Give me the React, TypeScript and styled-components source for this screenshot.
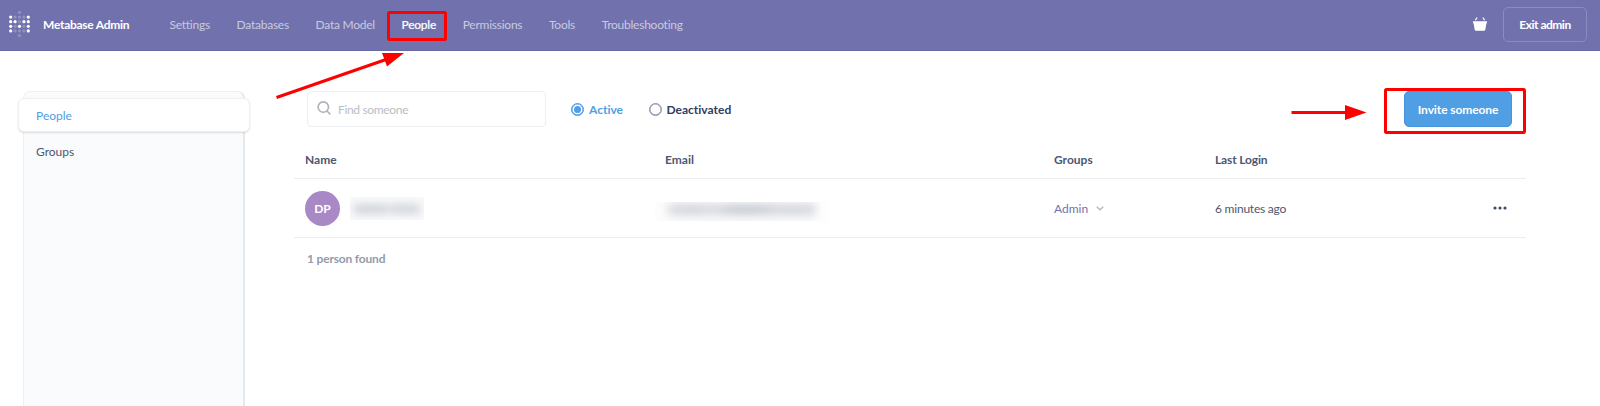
import React from "react";
import styled, { createGlobalStyle } from "styled-components";

const GlobalStyle = createGlobalStyle`
  *, *::before, *::after { box-sizing: border-box; }
  html, body { margin: 0; background: #fff; }
  body {
    font-family: Lato, sans-serif;
    font-size: 12px;
    line-height: 16px;
    font-variant-ligatures: none;
    color: #4c5773;
    overflow: hidden;
  }
`;

const Page = styled.div`
  position: relative;
  display: flex;
  flex-direction: column;
  width: 1600px;
  height: 406px;
  overflow: hidden;
`;

const Header = styled.header`
  display: flex;
  align-items: center;
  height: 51px;
  flex: none;
  padding: 0 13px 2px 9px;
  background: #7172ad;
  border-bottom: 1px solid #6a6ba6;
  color: #fff;
`;

const Brand = styled.div`
  display: flex;
  align-items: center;
  gap: 12px;
  width: 160.5px;
  font-weight: 700;
  letter-spacing: -0.27px;
  white-space: nowrap;

  span { padding-top: 1px; }
`;

const Nav = styled.nav`
  display: flex;
  flex: 1;
  gap: 26.7px;
  padding-top: 1px;
  letter-spacing: -0.25px;
`;

const NavLink = styled.a<{ $active?: boolean }>`
  color: ${(p) => (p.$active ? "#fff" : "rgba(255, 255, 255, 0.63)")};
  -webkit-text-stroke: ${(p) => (p.$active ? "0.2px #fff" : "0")};
  white-space: nowrap;
`;

const ExitButton = styled.button`
  width: 84px;
  height: 35px;
  margin-left: 16px;
  padding: 1px 0 0;
  border: 1px solid #8b8cc0;
  border-radius: 5px;
  background: transparent;
  color: #fff;
  font: inherit;
  font-weight: 700;
  letter-spacing: -0.5px;
`;

const Body = styled.div`
  display: flex;
  flex: 1;
  padding: 40px 74px 0 23px;
`;

const Sidebar = styled.aside`
  width: 222px;
  height: 340px;
  margin-right: 48px;
  padding-top: 6px;
  background: #f9fbfc;
  border: 1px solid #edeff1;
  border-right: 2px solid #e6e9ec;
  border-radius: 7px;
`;

const SidebarItem = styled.a<{ $active?: boolean }>`
  display: flex;
  align-items: center;
  height: 34px;
  margin: 0 ${(p) => (p.$active ? "-7px" : "0")} 3px ${(p) => (p.$active ? "-6px" : "0")};
  padding: ${(p) => (p.$active ? "2px 0 0 17px" : "0 0 0 12px")};
  border: ${(p) => (p.$active ? "1px solid #eeeff0" : "0")};
  border-radius: 6px;
  background: ${(p) => (p.$active ? "#fff" : "transparent")};
  box-shadow: ${(p) => (p.$active ? "0 1px 2px rgba(0, 0, 0, 0.13)" : "none")};
  color: ${(p) => (p.$active ? "#509ee3" : "#4c5773")};
`;

const Main = styled.main`
  width: 1233px;
`;

const Toolbar = styled.div`
  display: flex;
  align-items: center;
  height: 36px;
  padding: 0 14px;
`;

const SearchBox = styled.div`
  display: flex;
  align-items: center;
  gap: 7px;
  width: 239px;
  height: 36px;
  margin-right: 25px;
  padding: 1px 0 0 9px;
  border: 1px solid #eeeff0;
  border-radius: 4px;
  color: #b9bdc7;
  letter-spacing: -0.33px;

  svg { margin-bottom: 4px; }
`;

const RadioOption = styled.label<{ $checked?: boolean }>`
  display: flex;
  align-items: center;
  gap: 5px;
  margin-right: 25.5px;
  color: ${(p) => (p.$checked ? "#509ee3" : "#303d5c")};
  font-weight: 700;
  padding-top: 1px;
`;

const RadioDot = styled.span<{ $checked?: boolean }>`
  width: 13px;
  height: 13px;
  margin-bottom: 1px;
  padding: 2px;
  border: 1px solid ${(p) => (p.$checked ? "#3e93e6" : "#8790a3")};
  box-shadow: inset 0 0 0 0.5px ${(p) => (p.$checked ? "#3e93e6" : "#8790a3")};
  border-radius: 50%;
  background: ${(p) => (p.$checked ? "#509ee3" : "#fff")};
  background-clip: content-box;
`;

const InviteButton = styled.button`
  width: 108px;
  height: 36px;
  margin-left: auto;
  padding: 1px 0 0;
  border: 1px solid #4793d8;
  border-radius: 5px;
  background: #509ee3;
  color: #fff;
  font: inherit;
  font-weight: 700;
  letter-spacing: -0.1px;
`;

const Row = styled.div<{ $head?: boolean }>`
  display: grid;
  grid-template-columns: 360px 389px 161px 1fr 33px;
  align-items: center;
  height: ${(p) => (p.$head ? "52px" : "59px")};
  margin-left: 1px;
  padding-left: 11px;
  padding-top: ${(p) => (p.$head ? "15px" : "0")};
  border-bottom: 1px solid #eceef0;
  font-weight: ${(p) => (p.$head ? 700 : 400)};
`;

const Person = styled.div`
  display: flex;
  align-items: center;
  gap: 10px;
`;

const Avatar = styled.div`
  display: flex;
  align-items: center;
  justify-content: center;
  width: 35px;
  height: 35px;
  padding-top: 1px;
  border-radius: 50%;
  background: #a989c5;
  color: #fff;
  font-size: 12px;
  font-weight: 700;
`;

const Redacted = styled.div<{ $width: number; $height: number; $padding: string; $fill: string }>`
  display: flex;
  width: ${(p) => p.$width}px;
  height: ${(p) => p.$height}px;
  padding: ${(p) => p.$padding};
  overflow: hidden;

  &::before {
    content: "";
    flex: 1;
    background: ${(p) => p.$fill};
    filter: blur(4px);
  }
`;

const NameMask = styled.div`
  background: #f8f9fa;
`;

const EmailMask = styled.div`
  width: 176px;
  margin: 7px 0 0 -10px;
  background: linear-gradient(90deg, #fdfdfd, #f8f8f9 15%, #f8f8f9 85%, #fff);
`;

const GroupSelect = styled.div`
  display: flex;
  align-items: center;
  gap: 8px;
  padding-top: 1px;
  color: #7172ad;
`;

const LastLogin = styled.span`
  padding-top: 1px;
  letter-spacing: -0.22px;
`;

const HeadCell = styled.span<{ $tight?: boolean }>`
  letter-spacing: ${(p) => (p.$tight ? "-0.15px" : "0")};
`;

const Count = styled.div`
  padding: 13px 14px;
  color: #949aab;
  font-weight: 700;
  letter-spacing: -0.18px;
`;

const Annotations = styled.svg`
  position: absolute;
  left: 0;
  top: 0;
  pointer-events: none;
`;

const LOGO = ["..o..", "#ooo#", "##o##", "#o#o#", "#ooo#", "..o.."];

function Logo() {
  return (
    <svg width="22" height="28" viewBox="0 0 22 28">
      {LOGO.flatMap((row, y) =>
        row.split("").map((c, x) =>
          c === "." ? null : (
            <circle
              key={`${x}-${y}`}
              cx={1.7 + x * 4.4}
              cy={2.4 + y * 4.64}
              r={1.6}
              fill="#fff"
              opacity={c === "#" ? 1 : 0.22}
            />
          )
        )
      )}
    </svg>
  );
}

const NAV_ITEMS = ["Settings", "Databases", "Data Model", "People", "Permissions", "Tools", "Troubleshooting"];

export default function App() {
  return (
    <Page>
      <GlobalStyle />
      <Header>
        <Brand>
          <Logo />
          <span>Metabase Admin</span>
        </Brand>
        <Nav>
          {NAV_ITEMS.map((item) => (
            <NavLink key={item} $active={item === "People"}>{item}</NavLink>
          ))}
        </Nav>
        <svg width="14" height="14" viewBox="0 0 14 14">
          <path d="M0 4.2h14v2.1h-.6l-1.1 6.4q-.2 1.1-1.3 1.1H3q-1.1 0-1.3-1.1L.6 6.3H0z" fill="#fff" />
          <path d="M2.4 3.2 4.2.5M11.6 3.2 9.8.5" stroke="#fff" strokeWidth="1.2" fill="none" />
        </svg>
        <ExitButton>Exit admin</ExitButton>
      </Header>
      <Body>
        <Sidebar>
          <SidebarItem $active>People</SidebarItem>
          <SidebarItem>Groups</SidebarItem>
        </Sidebar>
        <Main>
          <Toolbar>
            <SearchBox>
              <svg width="14" height="14" viewBox="0 0 14 14" fill="none" stroke="#adb2bd" strokeWidth="1.6">
                <circle cx="6.3" cy="6.1" r="5.2" />
                <path d="M10 10l3.3 3.4" />
              </svg>
              Find someone
            </SearchBox>
            <RadioOption $checked><RadioDot $checked />Active</RadioOption>
            <RadioOption><RadioDot />Deactivated</RadioOption>
            <InviteButton>Invite someone</InviteButton>
          </Toolbar>
          <Row $head>
            <HeadCell>Name</HeadCell>
            <HeadCell>Email</HeadCell>
            <HeadCell>Groups</HeadCell>
            <HeadCell $tight>Last Login</HeadCell>
          </Row>
          <Row>
            <Person>
              <Avatar>DP</Avatar>
              <NameMask>
                <Redacted
                  $width={74}
                  $height={23}
                  $padding="8px 4px 7px"
                  $fill="linear-gradient(90deg, #c9ccd6 0 45%, #dadce2 50% 55%, #cccfd8 60%)"
                />
              </NameMask>
            </Person>
            <EmailMask>
              <Redacted
                $width={176}
                $height={19}
                $padding="3px 16px 7px 13px"
                $fill="linear-gradient(90deg, #d6d8df, #cdd0d8 15%, #d6d8df 32%, #c3c7d1 45% 60%, #d0d3db 75%, #d0d3db)"
              />
            </EmailMask>
            <GroupSelect>
              Admin
              <svg width="8" height="5" viewBox="0 0 8 5" fill="none" stroke="#b4b9c4" strokeWidth="1.4">
                <path d="M.7.7 4 3.8 7.3.7" />
              </svg>
            </GroupSelect>
            <LastLogin>6 minutes ago</LastLogin>
            <svg width="14" height="4" viewBox="0 0 14 4" fill="#3f4a6b">
              <circle cx="2" cy="2" r="1.6" />
              <circle cx="7" cy="2" r="1.6" />
              <circle cx="12" cy="2" r="1.6" />
            </svg>
          </Row>
          <Count>1 person found</Count>
        </Main>
      </Body>
      <Annotations width="1600" height="406" fill="none" stroke="#f00" strokeWidth="3">
        <rect x="388.5" y="12.5" width="57" height="27" rx="1" />
        <rect x="1385.5" y="89.5" width="139" height="43" rx="1" />
        <path d="M276.5 97.5 386 59.5M1291.5 112.5H1347" />
        <path d="M404 53 382 53 387 66.5zM1366.5 112.5 1345 105v15z" fill="#f00" stroke="none" />
      </Annotations>
    </Page>
  );
}
